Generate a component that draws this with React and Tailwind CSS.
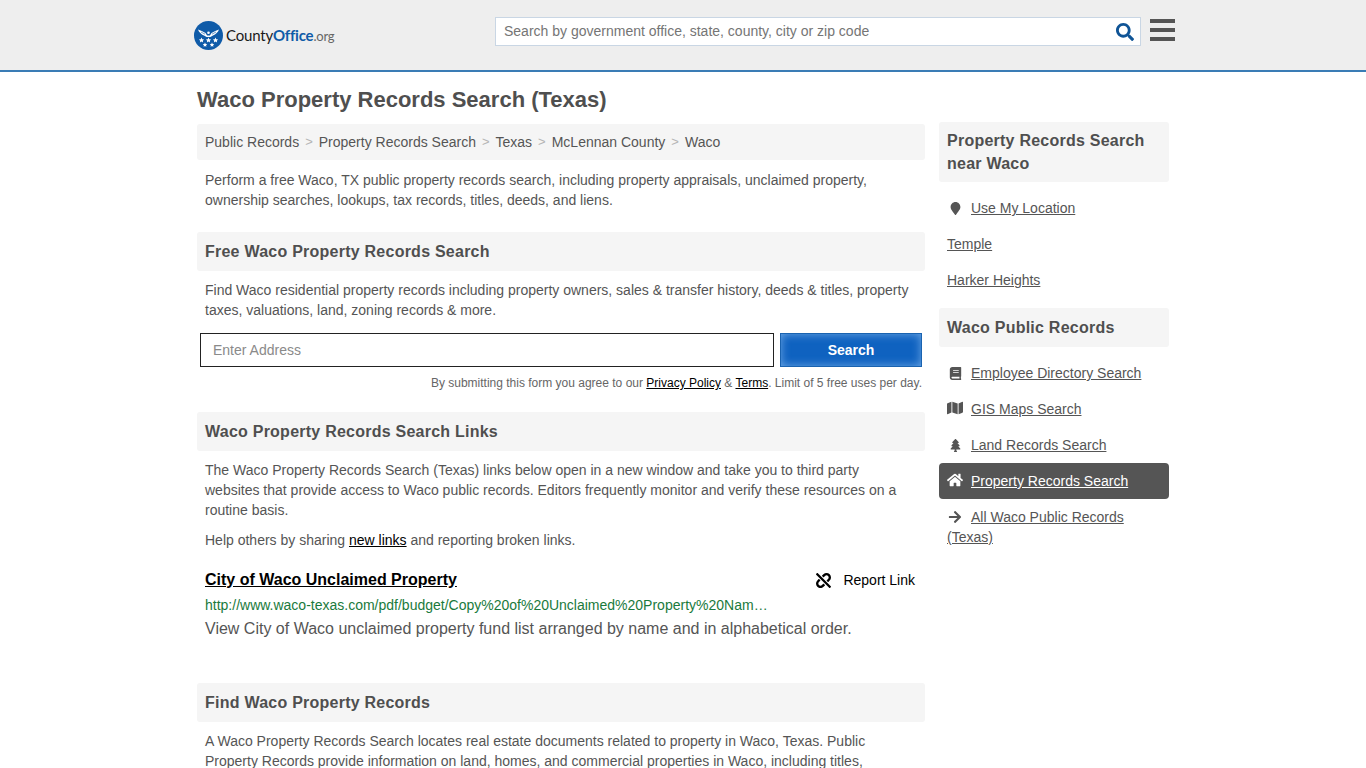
import React from "react";
import { FaMapMarker, FaBook, FaMap, FaTree, FaHome, FaArrowRight, FaUnlink, FaSearch } from "react-icons/fa";

function Logo() {
  return (
    <div className="flex items-center w-[136px] h-[30px]">
      <svg viewBox="0 0 29 29" className="w-[29px] h-[29px] shrink-0">
        <circle cx="14.5" cy="14.5" r="14.5" fill="#0f5ba8" />
        <path d="M4 8.5c2.5 1 5 1.8 7.5 3.6l1.6 2.4h2.8l1.6-2.4c2.500-1.800 5-2.600 7.500-3.600-1 2.600-3.200 5-6 6.100l-2.600 1.500h-3.800l-2.600-1.500c-2.800-1.100-5-3.500-6-6.100z" fill="#fff" />
        <path d="M7 11l4 2.200M22 11l-4 2.200" stroke="#0f5ba8" strokeWidth="0.6" />
        <circle cx="14.500" cy="11.800" r="1.300" fill="#fff" />
        <g fill="#fff">
          <path id="s1" d="M7.500 16.500l.8 1.700 1.800.2-1.300 1.300.3 1.800-1.600-.9-1.600.9.300-1.800-1.300-1.300 1.800-.2z" />
          <path d="M14.500 16.500l.8 1.700 1.800.2-1.300 1.300.3 1.800-1.600-.9-1.600.9.300-1.800-1.300-1.300 1.800-.2z" />
          <path d="M21.500 16.500l.8 1.700 1.800.2-1.300 1.300.3 1.800-1.600-.9-1.600.9.300-1.800-1.300-1.300 1.800-.2z" />
          <path d="M11 21.500l.7 1.400 1.500.2-1.100 1.100.3 1.500-1.400-.7-1.400.7.300-1.500-1.100-1.100 1.500-.2z" />
          <path d="M18 21.500l.7 1.400 1.500.2-1.100 1.100.3 1.500-1.400-.7-1.400.7.300-1.500-1.100-1.100 1.500-.2z" />
        </g>
      </svg>
      <div className="ml-[3px] mt-[1px] font-['Lato',sans-serif] text-[15px] leading-none whitespace-nowrap tracking-[-0.2px]">
        <span className="text-[#1a1a1a]">County</span>
        <span className="text-[#0f5ba8] font-bold">Office</span>
        <span className="text-[#666] text-[13px]">.org</span>
      </div>
    </div>
  );
}

function SectionHead({ children }) {
  return (
    <h2 className="bg-[#f5f5f5] rounded-[3px] h-[39px] px-2 flex items-center text-[16px] font-bold text-[#4f4f4f] tracking-[0.24px]">
      {children}
    </h2>
  );
}

function Crumb({ children, last }) {
  return (
    <>
      <span className="underline-offset-2">{children}</span>
      {!last && <span className="text-[#b4b4b4] mx-[6px] text-[13px]">&gt;</span>}
    </>
  );
}

function SideLink({ icon: Icon, children, active, iconClass }) {
  return (
    <div className={`rounded-[4px] px-2 py-[8px] leading-[20px] ${active ? "bg-[#555] text-white" : "text-[#555]"}`}>
      {Icon && (
        <span className="inline-flex w-[16px] mr-[8px] justify-center align-[-2px]">
          <Icon className={iconClass || "text-[14px]"} />
        </span>
      )}
      <a className="underline">{children}</a>
    </div>
  );
}

export default function App() {
  return (
    <div className="h-[768px] overflow-hidden bg-white font-['Liberation_Sans',Arial,sans-serif] text-[14px] text-[#555]">
      <header className="h-[72px] bg-[#eeeeee] border-b-2 border-[#3a7cb5]">
        <div className="w-[982px] ml-[194px] flex items-start">
          <div className="mt-[20px]">
            <Logo />
          </div>
          <div className="ml-[165px] mt-[17px] w-[646px] h-[29px] bg-white border border-[#c9d6e4] flex items-center pl-[8px] pr-[6px]">
            <span className="flex-1 text-[14px] text-[#757575]">Search by government office, state, county, city or zip code</span>
            <FaSearch className="text-[#0f5496] text-[18px] mr-[0px]" />
          </div>
          <div className="ml-[9px] mt-[19px] w-[25px] flex flex-col gap-[5px]">
            <div className="h-[4px] bg-[#555]" />
            <div className="h-[4px] bg-[#555]" />
            <div className="h-[4px] bg-[#555]" />
          </div>
        </div>
      </header>

      <div className="w-[972px] ml-[197px]">
        <h1 className="text-[22px] font-bold text-[#4f4f4f] leading-[26px] mt-[15px]">Waco Property Records Search (Texas)</h1>

        <div className="flex gap-[14px] items-start">
          <main className="w-[728px]">
            <nav className="mt-[11px] h-[36px] bg-[#f5f5f5] rounded-[3px] px-2 flex items-center">
              <Crumb>Public Records</Crumb>
              <Crumb>Property Records Search</Crumb>
              <Crumb>Texas</Crumb>
              <Crumb>McLennan County</Crumb>
              <Crumb last>Waco</Crumb>
            </nav>
            <p className="px-2 mt-[10px] leading-[20px]">
              Perform a free Waco, TX public property records search, including property appraisals, unclaimed property, ownership searches, lookups, tax records, titles, deeds, and liens.
            </p>

            <div className="mt-[22px]">
              <SectionHead>Free Waco Property Records Search</SectionHead>
            </div>
            <p className="px-2 mt-[9px] leading-[20px]">
              Find Waco residential property records including property owners, sales &amp; transfer history, deeds &amp; titles, property taxes, valuations, land, zoning records &amp; more.
            </p>
            <div className="flex mt-[13px] ml-[3px] gap-[6px]">
              <div className="w-[574px] h-[34px] border border-[#222] bg-white flex items-center px-3 text-[#8a8a8a]">Enter Address</div>
              <button className="w-[142px] h-[34px] border border-[#1a63b0] text-white font-bold bg-[#0f62c0] shadow-[inset_0_0_10px_rgba(140,190,240,0.75)]">Search</button>
            </div>
            <p className="mt-[8px] pr-[3px] text-right text-[12px] leading-[16px] text-[#666]">
              By submitting this form you agree to our <a className="underline text-black">Privacy Policy</a> &amp; <a className="underline text-black">Terms</a>. Limit of 5 free uses per day.
            </p>

            <div className="mt-[21px]">
              <SectionHead>Waco Property Records Search Links</SectionHead>
            </div>
            <p className="px-2 mt-[9px] leading-[20px]">
              The Waco Property Records Search (Texas) links below open in a new window and take you to third party websites that provide access to Waco public records. Editors frequently monitor and verify these resources on a routine basis.
            </p>
            <p className="px-2 mt-[10px] leading-[20px]">
              Help others by sharing <a className="underline text-black">new links</a> and reporting broken links.
            </p>

            <div className="px-2 mt-[20px]">
              <div className="flex items-center justify-between h-[20px]">
                <a className="underline text-black font-bold text-[16px]">City of Waco Unclaimed Property</a>
                <span className="flex items-center text-black mr-[2px]">
                  <FaUnlink className="text-[15px] mr-[12px]" />
                  Report Link
                </span>
              </div>
              <div className="mt-[5px] leading-[20px] text-[#1a7a3c] w-[570px] truncate">http://www.waco-texas.com/pdf/budget/Copy%20of%20Unclaimed%20Property%20Name%20List.pdf</div>
              <p className="mt-[3px] text-[16px] leading-[22px] text-[#555]">View City of Waco unclaimed property fund list arranged by name and in alphabetical order.</p>
            </div>

            <div className="mt-[43px]">
              <SectionHead>Find Waco Property Records</SectionHead>
            </div>
            <p className="px-2 mt-[9px] leading-[20px]">
              A Waco Property Records Search locates real estate documents related to property in Waco, Texas. Public Property Records provide information on land, homes, and commercial properties in Waco, including titles, mortgages, property deeds, and a range of other documents.
            </p>
          </main>

          <aside className="w-[230px]">
            <h2 className="mt-[9px] bg-[#f5f5f5] rounded-[3px] px-2 py-[7px] text-[16px] font-bold leading-[23px] text-[#4f4f4f] tracking-[0.24px]">
              Property Records Search near Waco
            </h2>
            <div className="mt-[8px]">
              <SideLink icon={FaMapMarker} iconClass="text-[13px]">Use My Location</SideLink>
              <SideLink>Temple</SideLink>
              <SideLink>Harker Heights</SideLink>
            </div>
            <div className="mt-[10px]">
              <SectionHead>Waco Public Records</SectionHead>
            </div>
            <div className="mt-[8px]">
              <SideLink icon={FaBook} iconClass="text-[13px]">Employee Directory Search</SideLink>
              <SideLink icon={FaMap} iconClass="text-[16px]">GIS Maps Search</SideLink>
              <SideLink icon={FaTree} iconClass="text-[13px]">Land Records Search</SideLink>
              <SideLink icon={FaHome} iconClass="text-[16px]" active>Property Records Search</SideLink>
              <SideLink icon={FaArrowRight} iconClass="text-[14px]">All Waco Public Records (Texas)</SideLink>
            </div>
          </aside>
        </div>
      </div>
    </div>
  );
}
